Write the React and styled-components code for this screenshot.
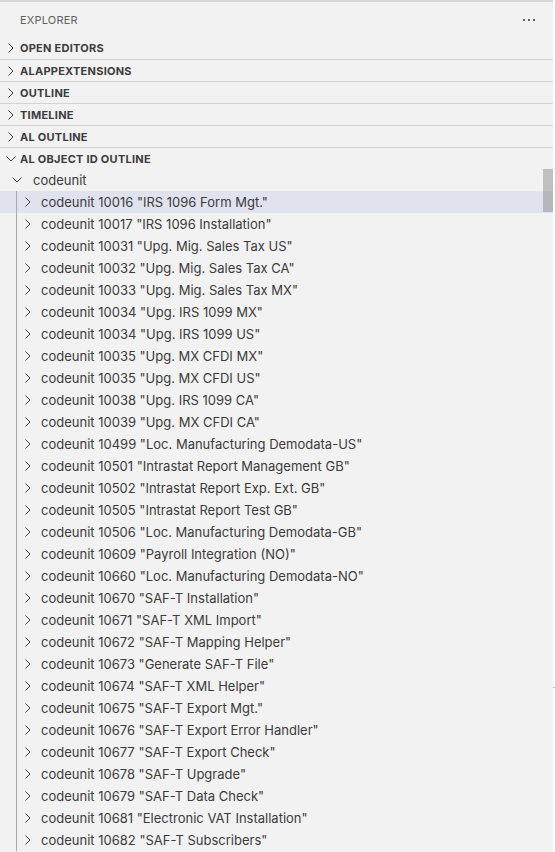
import React from "react";
import styled, { createGlobalStyle } from "styled-components";

const GlobalStyle = createGlobalStyle`
  html, body {
    margin: 0;
    padding: 0;
    background: #ffffff;
  }
  body {
    font-family: "Inter", "Liberation Sans", sans-serif;
    -webkit-font-smoothing: antialiased;
  }
`;

const units = [
  ["10016", "IRS 1096 Form Mgt."],
  ["10017", "IRS 1096 Installation"],
  ["10031", "Upg. Mig. Sales Tax US"],
  ["10032", "Upg. Mig. Sales Tax CA"],
  ["10033", "Upg. Mig. Sales Tax MX"],
  ["10034", "Upg. IRS 1099 MX"],
  ["10034", "Upg. IRS 1099 US"],
  ["10035", "Upg. MX CFDI MX"],
  ["10035", "Upg. MX CFDI US"],
  ["10038", "Upg. IRS 1099 CA"],
  ["10039", "Upg. MX CFDI CA"],
  ["10499", "Loc. Manufacturing Demodata-US"],
  ["10501", "Intrastat Report Management GB"],
  ["10502", "Intrastat Report Exp. Ext. GB"],
  ["10505", "Intrastat Report Test GB"],
  ["10506", "Loc. Manufacturing Demodata-GB"],
  ["10609", "Payroll Integration (NO)"],
  ["10660", "Loc. Manufacturing Demodata-NO"],
  ["10670", "SAF-T Installation"],
  ["10671", "SAF-T XML Import"],
  ["10672", "SAF-T Mapping Helper"],
  ["10673", "Generate SAF-T File"],
  ["10674", "SAF-T XML Helper"],
  ["10675", "SAF-T Export Mgt."],
  ["10676", "SAF-T Export Error Handler"],
  ["10677", "SAF-T Export Check"],
  ["10678", "SAF-T Upgrade"],
  ["10679", "SAF-T Data Check"],
  ["10681", "Electronic VAT Installation"],
  ["10682", "SAF-T Subscribers"],
];

const sections = ["OPEN EDITORS", "ALAPPEXTENSIONS", "OUTLINE", "TIMELINE", "AL OUTLINE"];

// codicon-like thin chevrons
function Chevron({ open }) {
  return (
    <svg width="16" height="16" viewBox="0 0 16 16" fill="none">
      {open ? (
        <polyline points="3.5,5.5 8,10 12.5,5.5" stroke="#424242" strokeWidth="1" />
      ) : (
        <polyline points="5.5,3.5 10,8 5.5,12.5" stroke="#424242" strokeWidth="1" />
      )}
    </svg>
  );
}

export default function App() {
  return (
    <>
      <GlobalStyle />
      <Page>
        <Sidebar>
          <TitleBar>
            <Title>EXPLORER</Title>
            <Dots>
              <span />
              <span />
              <span />
            </Dots>
          </TitleBar>
          {sections.map((s, i) => (
            <PaneHeader key={s} $first={i === 0}>
              <Twistie><Chevron /></Twistie>
              <HeaderText>{s}</HeaderText>
            </PaneHeader>
          ))}
          <PaneHeader>
            <Twistie><Chevron open /></Twistie>
            <HeaderText>AL OBJECT ID OUTLINE</HeaderText>
          </PaneHeader>
          <Tree>
            <GroupRow>
              <Twistie><Chevron open /></Twistie>
              <Label>codeunit</Label>
            </GroupRow>
            <Children>
              {units.map(([id, name], i) => (
                <ItemRow key={i} $selected={i === 0}>
                  <Twistie><Chevron /></Twistie>
                  <Label>codeunit {id} "{name}"</Label>
                </ItemRow>
              ))}
            </Children>
            <ScrollThumb />
          </Tree>
        </Sidebar>
        <Sash />
      </Page>
    </>
  );
}

const Page = styled.div`
  position: relative;
  width: 555px;
  height: 852px;
  overflow: hidden;
  background: #ffffff;
`;

const Sidebar = styled.div`
  width: 553px;
  height: 852px;
  background: #f2f2f2;
  border-top: 2px solid #d6d6d6;
  box-sizing: border-box;
  display: flex;
  flex-direction: column;
`;

const Sash = styled.div`
  position: absolute;
  left: 553px;
  top: 687px;
  width: 2px;
  height: 1px;
  background: #bdbdbd;
`;

const TitleBar = styled.div`
  height: 35px;
  display: flex;
  align-items: center;
  justify-content: space-between;
  padding: 0 18px 0 20px;
  flex-shrink: 0;
`;

const Title = styled.div`
  font-size: 11px;
  color: #616161;
  letter-spacing: 0.2px;
  margin-top: 1px;
`;

const Dots = styled.div`
  display: flex;
  gap: 3px;
  margin-top: 1px;
  span {
    width: 2px;
    height: 2px;
    background: #616161;
  }
`;

const PaneHeader = styled.div`
  height: 22px;
  display: flex;
  align-items: center;
  padding-left: 3px;
  border-top: ${(p) => (p.$first ? "none" : "1px solid #d4d4d4")};
  box-sizing: border-box;
  flex-shrink: 0;
`;

const Twistie = styled.div`
  width: 16px;
  height: 16px;
  display: flex;
  flex-shrink: 0;
`;

const HeaderText = styled.div`
  font-size: 11px;
  font-weight: 700;
  color: #3c3c3c;
  margin-left: 1px;
  letter-spacing: 0.25px;
`;

const Tree = styled.div`
  position: relative;
  flex: 1;
`;

const GroupRow = styled.div`
  height: 22px;
  display: flex;
  align-items: center;
  padding-left: 9px;
  ${Twistie} {
    margin-right: 8px;
  }
`;

const Children = styled.div`
  position: relative;
  &::before {
    content: "";
    position: absolute;
    left: 16px;
    top: 0;
    bottom: 0;
    width: 1px;
    background: #a9a9a9;
  }
`;

const ItemRow = styled.div`
  height: 22px;
  display: flex;
  align-items: center;
  padding-left: 20px;
  background: ${(p) => (p.$selected ? "#e0e2ee" : "transparent")};
  ${Twistie} {
    margin-right: 5px;
  }
`;

const Label = styled.div`
  font-size: 13px;
  color: #3b3b3b;
  white-space: nowrap;
`;

const ScrollThumb = styled.div`
  position: absolute;
  right: 0;
  top: 0;
  width: 10px;
  height: 43px;
  background: rgba(100, 100, 100, 0.35);
`;
